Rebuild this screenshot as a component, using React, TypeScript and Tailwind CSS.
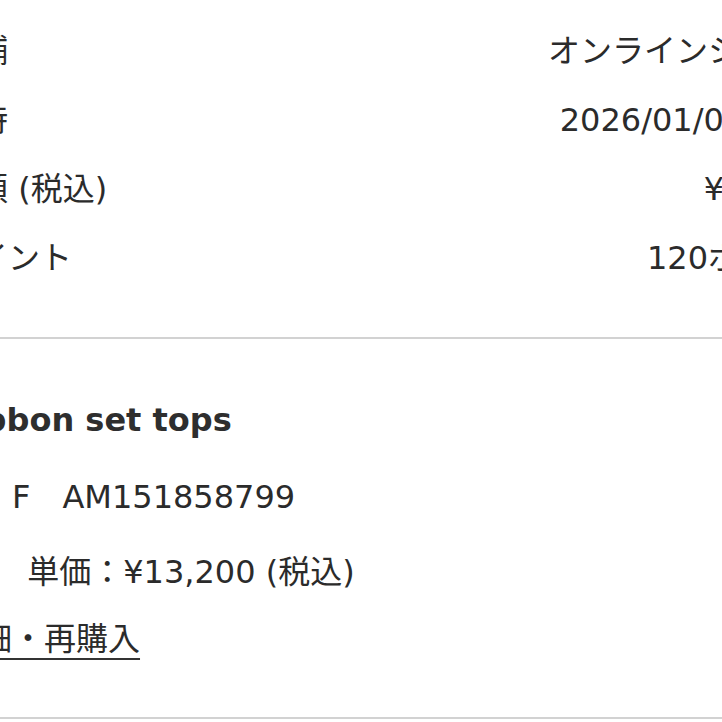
const FONT = "font-['DejaVu_Sans','Noto_Sans_CJK_JP',sans-serif]";

const SUMMARY = [
  { label: '購入店舗', value: ['オンラインショップ'] },
  { label: '購入日時', value: ['2026/01/05', '9:41'] },
  { label: '合計金額 (税込)', value: ['¥13,200'] },
  { label: '獲得ポイント', value: ['120ポイント'] },
];

export default function App() {
  return (
    <div className={`w-[722px] h-[722px] overflow-hidden bg-white text-[#2b2b2b] ${FONT}`}>
      <div className="ml-[-120px] w-[956px] pt-[16px]">
        {SUMMARY.map((row) => (
          <div key={row.label} className="flex justify-between h-[69px] items-center text-[32px] leading-[40px] whitespace-nowrap">
            <span>{row.label}</span>
            <span className="flex gap-[20px]">
              {row.value.map((v) => (
                <span key={v}>{v}</span>
              ))}
            </span>
          </div>
        ))}
      </div>

      <div className="mt-[45px] border-t-2 border-[#d2d2d2]" />

      <div className="flex ml-[-52px] pt-[57px] gap-6">
        <div className="flex flex-col whitespace-nowrap text-[32px]">
          <div className="font-bold leading-[48px] text-[#2e2e2e]">Ribbon set tops</div>
          <div className="mt-[29px] leading-[48px]">黒　F　AM151858799</div>
          <div className="mt-[27px] leading-[48px]">×1　単価：¥13,200 (税込)</div>
          <div className="mt-[19px] leading-[48px]">
            <a className="underline decoration-2 underline-offset-[8px] decoration-[#333]">詳細・再購入</a>
          </div>
        </div>
      </div>

      <div className="mt-[54px] border-t-2 border-[#d2d2d2]" />
    </div>
  );
}
